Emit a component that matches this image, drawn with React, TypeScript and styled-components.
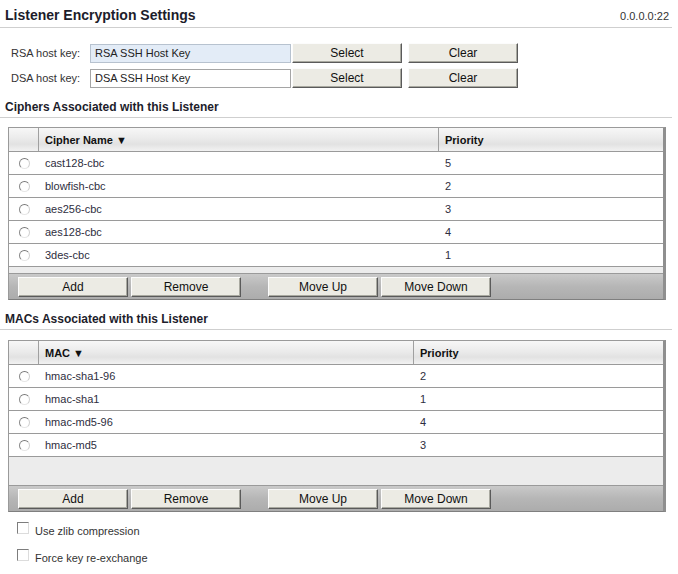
import styled, { createGlobalStyle } from "styled-components";

const Global = createGlobalStyle`
  html, body { margin: 0; padding: 0; background: #fff; }
  body { font-family: "Liberation Sans", Arial, sans-serif; font-size: 11px; color: #222; }
`;

const Page = styled.div`
  width: 672px;
  padding-top: 7px;
`;

const TitleBar = styled.div`
  display: flex;
  justify-content: space-between;
  align-items: baseline;
  padding: 0 3px 0 5px;
  height: 20px;
  border-bottom: 1px solid #cfcfcf;
`;

const Title = styled.h1`
  margin: 0;
  font-size: 14px;
  font-weight: bold;
  color: #1d1d2b;
`;

const Address = styled.span`
  font-size: 11px;
  color: #333;
`;

const KeyForm = styled.div`
  display: flex;
  flex-direction: column;
  gap: 6px;
  padding: 15px 0 0 11px;
`;

const KeyRow = styled.div`
  display: grid;
  grid-template-columns: 79px 202px 116px 110px;
  align-items: center;
  height: 19px;
`;

const KeyLabel = styled.span`
  font-size: 11px;
  color: #333;
`;

const KeyInput = styled.div<{ $focused?: boolean }>`
  height: 17px;
  width: 195px;
  border: 1px solid ${p => (p.$focused ? "#b7c2cf" : "#a5a5a5")};
  background: ${p => (p.$focused ? "#e3ecf7" : "#fff")};
  font-size: 11px;
  line-height: 17px;
  padding-left: 4px;
  color: #222;
`;

const Btn = styled.button`
  width: 110px;
  height: 20px;
  margin: 0;
  padding: 0;
  font-family: "Liberation Sans", Arial, sans-serif;
  font-size: 12px;
  color: #111;
  background: #ecebe4;
  border: 1px solid;
  border-color: #fcfcfc #5a5a5a #5a5a5a #fcfcfc;
  box-shadow: inset -1px -1px 0 #a9a9a0;
`;

const Spacer = styled.div<{ $h: number }>`
  height: ${p => p.$h}px;
`;

const SectionHead = styled.h2`
  margin: 0;
  padding: 0 0 0 5px;
  height: 17px;
  font-size: 12px;
  font-weight: bold;
  color: #1d1d2b;
  border-bottom: 1px solid #cfcfcf;
`;

const Table = styled.div<{ $top: number }>`
  margin: ${p => p.$top}px 0 0 8px;
  width: 654px;
  border: 1px solid #9a9a9a;
  border-right: 3px solid #8f8f8f;
  border-bottom-color: #7f7f7f;
`;

const HeadRow = styled.div<{ $cols: string }>`
  display: grid;
  grid-template-columns: ${p => p.$cols};
  height: 23px;
  background: linear-gradient(#f7f7f7, #ebebeb 45%, #e2e2e2 70%, #f2f2f2);
  border-bottom: 1px solid #9a9a9a;
`;

const HeadCell = styled.div<{ $sep?: boolean }>`
  display: flex;
  align-items: center;
  padding-left: 6px;
  font-size: 11px;
  font-weight: bold;
  color: #111;
  border-left: ${p => (p.$sep ? "1px solid #a0a0a0" : "none")};
`;

const Row = styled.div<{ $cols: string }>`
  display: grid;
  grid-template-columns: ${p => p.$cols};
  height: 22px;
  background: #fff;
  border-bottom: 1px solid #9a9a9a;
`;

const Cell = styled.div`
  display: flex;
  align-items: center;
  padding-left: 7px;
  font-size: 11px;
  color: #2e2e3e;
`;

const RadioCell = styled.div`
  display: flex;
  align-items: center;
  justify-content: center;
`;

const Radio = styled.span`
  width: 9px;
  height: 9px;
  border-radius: 50%;
  border: 1px solid;
  border-color: #777 #d0d0d0 #e6e6e6 #8a8a8a;
  background: #fff;
  margin-left: 1px;
`;

const Filler = styled.div<{ $h: number }>`
  height: ${p => p.$h}px;
  background: #ececec;
  border-bottom: 1px solid #9a9a9a;
`;

const ButtonBar = styled.div`
  display: flex;
  align-items: center;
  height: 25px;
  padding-left: 9px;
  background: linear-gradient(#c9c9c9, #b6b6b6 50%, #acacac);
`;

const BtnGroup = styled.div`
  display: flex;
  gap: 3px;
  & + & {
    margin-left: 27px;
  }
`;

const Options = styled.div`
  display: flex;
  flex-direction: column;
  gap: 15px;
  padding: 13px 0 0 17px;
`;

const Option = styled.label`
  display: flex;
  align-items: center;
  gap: 6px;
  font-size: 11px;
  color: #333;
`;

const Check = styled.span`
  width: 10px;
  height: 10px;
  border: 1px solid;
  border-color: #7d7d7d #dcdcdc #dcdcdc #7d7d7d;
  background: #fff;
  margin-top: -7px;
`;

type Item = { name: string; priority: number };

const ciphers: Item[] = [
  { name: "cast128-cbc", priority: 5 },
  { name: "blowfish-cbc", priority: 2 },
  { name: "aes256-cbc", priority: 3 },
  { name: "aes128-cbc", priority: 4 },
  { name: "3des-cbc", priority: 1 },
];

const macs: Item[] = [
  { name: "hmac-sha1-96", priority: 2 },
  { name: "hmac-sha1", priority: 1 },
  { name: "hmac-md5-96", priority: 4 },
  { name: "hmac-md5", priority: 3 },
];

type TableProps = { head: string; items: Item[]; cols: string; filler: number; top: number };

function ListTable({ head, items, cols, filler, top }: TableProps) {
  return (
    <Table $top={top}>
      <HeadRow $cols={cols}>
        <HeadCell />
        <HeadCell $sep>{head} ▼</HeadCell>
        <HeadCell $sep>Priority</HeadCell>
      </HeadRow>
      {items.map(it => (
        <Row key={it.name} $cols={cols}>
          <RadioCell><Radio /></RadioCell>
          <Cell>{it.name}</Cell>
          <Cell>{it.priority}</Cell>
        </Row>
      ))}
      <Filler $h={filler} />
      <ButtonBar>
        <BtnGroup>
          <Btn>Add</Btn>
          <Btn>Remove</Btn>
        </BtnGroup>
        <BtnGroup>
          <Btn>Move Up</Btn>
          <Btn>Move Down</Btn>
        </BtnGroup>
      </ButtonBar>
    </Table>
  );
}

export default function App() {
  return (
    <Page>
      <Global />
      <TitleBar>
        <Title>Listener Encryption Settings</Title>
        <Address>0.0.0.0:22</Address>
      </TitleBar>

      <KeyForm>
        <KeyRow>
          <KeyLabel>RSA host key:</KeyLabel>
          <KeyInput $focused>RSA SSH Host Key</KeyInput>
          <Btn>Select</Btn>
          <Btn>Clear</Btn>
        </KeyRow>
        <KeyRow>
          <KeyLabel>DSA host key:</KeyLabel>
          <KeyInput>DSA SSH Host Key</KeyInput>
          <Btn>Select</Btn>
          <Btn>Clear</Btn>
        </KeyRow>
      </KeyForm>

      <Spacer $h={13} />
      <SectionHead>Ciphers Associated with this Listener</SectionHead>
      <ListTable head="Cipher Name" items={ciphers} cols="29px 400px 1fr" filler={6} top={9} />

      <Spacer $h={12} />
      <SectionHead>MACs Associated with this Listener</SectionHead>
      <ListTable head="MAC" items={macs} cols="29px 375px 1fr" filler={28} top={10} />

      <Options>
        <Option><Check />Use zlib compression</Option>
        <Option><Check />Force key re-exchange</Option>
      </Options>
    </Page>
  );
}
